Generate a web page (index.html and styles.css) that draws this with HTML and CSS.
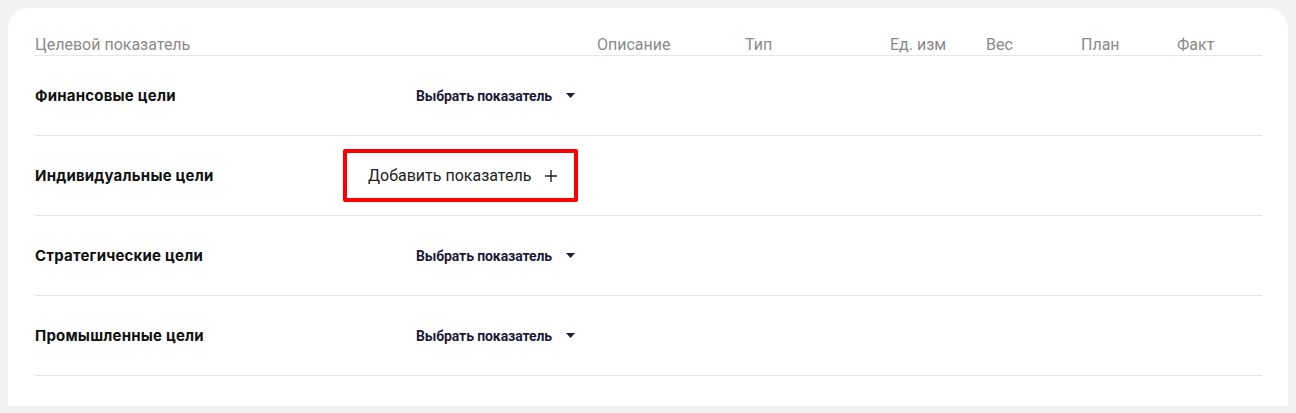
FILE: index.html
```html
<!DOCTYPE html>
<html lang="ru">
<head>
    <meta charset="UTF-8">
    <title>Целевые показатели</title>
    <link rel="stylesheet" href="styles.css">
</head>
<body>
    <section class="card">
        <div class="head">
            <span>Целевой показатель</span>
            <span>Описание</span>
            <span>Тип</span>
            <span>Ед. изм</span>
            <span>Вес</span>
            <span>План</span>
            <span>Факт</span>
        </div>

        <div class="row">
            <span class="row-name">Финансовые цели</span>
            <div class="row-action">
                <button class="select">Выбрать показатель
                    <svg width="9" height="5" viewBox="0 0 9 5"><path d="M0 0h9L4.5 5z" fill="#1d1b3b"/></svg>
                </button>
            </div>
        </div>

        <div class="row">
            <span class="row-name">Индивидуальные цели</span>
            <div class="row-action">
                <button class="add">Добавить показатель
                    <svg width="12" height="12" viewBox="0 0 12 12"><path d="M6 0v12M0 6h12" stroke="#222" stroke-width="1.4"/></svg>
                </button>
            </div>
        </div>

        <div class="row">
            <span class="row-name">Стратегические цели</span>
            <div class="row-action">
                <button class="select">Выбрать показатель
                    <svg width="9" height="5" viewBox="0 0 9 5"><path d="M0 0h9L4.5 5z" fill="#1d1b3b"/></svg>
                </button>
            </div>
        </div>

        <div class="row">
            <span class="row-name">Промышленные цели</span>
            <div class="row-action">
                <button class="select">Выбрать показатель
                    <svg width="9" height="5" viewBox="0 0 9 5"><path d="M0 0h9L4.5 5z" fill="#1d1b3b"/></svg>
                </button>
            </div>
        </div>
    </section>
</body>
</html>
```

FILE: styles.css
```css
/* Общие стили */
body {
    margin: 0;
    padding: 8px;
    background-color: #f2f2f2;
    font-family: Roboto, "Noto Sans", sans-serif;
}

/* Карточка */
.card {
    background-color: #fff;
    border-radius: 20px 20px 0 0;
    padding: 28px 26px 30px 27px;
    width: 1227px;
}

/* Шапка таблицы */
.head {
    display: grid;
    grid-template-columns: 562px 148px 145px 96px 95px 96px 85px;
    height: 19px;
    border-bottom: 1px solid #e6e6e6;
    color: #8a8a8a;
    font-size: 16px;
    line-height: 18px;
}

/* Строки */
.row {
    display: grid;
    grid-template-columns: 308px 235px;
    align-items: center;
    height: 79px;
    border-bottom: 1px solid #e6e6e6;
}
.row-name {
    font-family: Inter, Roboto, sans-serif;
    font-size: 15px;
    font-weight: bold;
    letter-spacing: 0.2px;
    color: #111;
}
.row-action {
    display: flex;
    justify-content: flex-end;
}

button {
    display: flex;
    align-items: center;
    background: none;
    border: none;
    padding: 0;
    font-family: inherit;
    cursor: pointer;
}
.select {
    gap: 14px;
    margin-right: 3px;
    font-size: 14px;
    font-weight: bold;
    color: #1d1b3b;
    letter-spacing: -0.1px;
}
.add {
    gap: 14px;
    width: 235px;
    height: 53px;
    box-sizing: border-box;
    padding-left: 21px;
    border: 4px solid #ff0000;
    border-radius: 2px;
    font-size: 16px;
    color: #222;
}
```
